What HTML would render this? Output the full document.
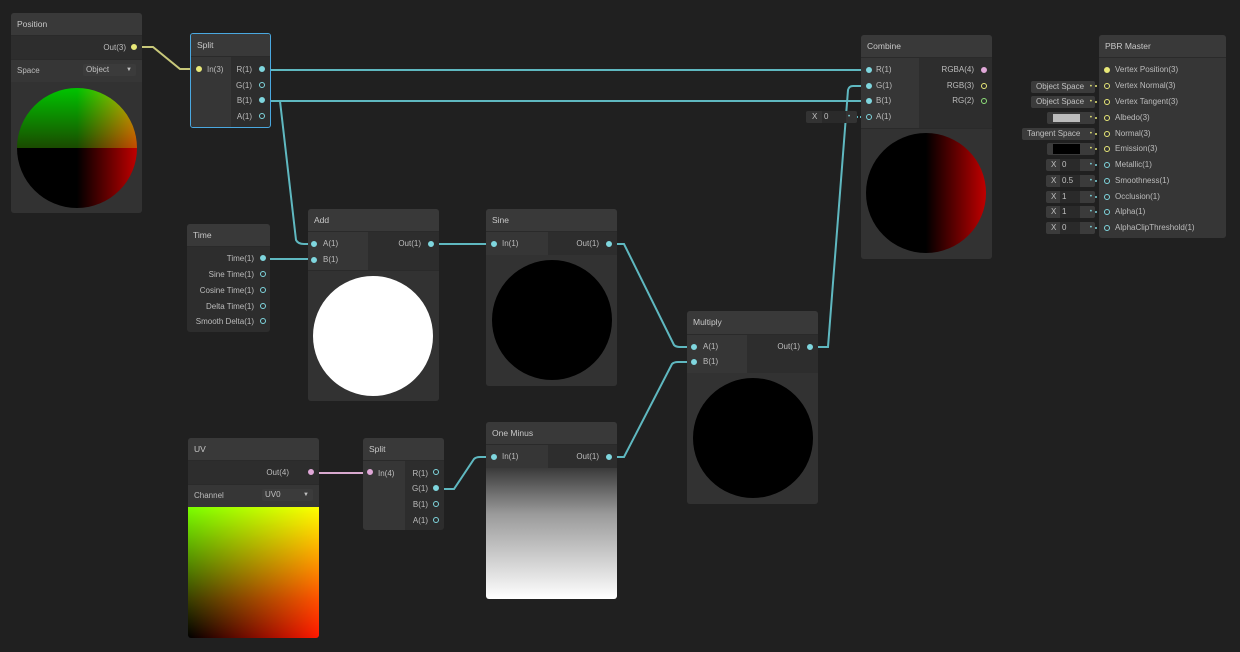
<!DOCTYPE html>
<html><head><style>
*{margin:0;padding:0;box-sizing:border-box}
body{width:1240px;height:652px;background:#202020;font-family:"Liberation Sans",sans-serif;font-size:8px;color:#c4c4c4;position:relative;overflow:hidden}
.n{position:absolute;background:#2d2d2d;border-radius:3px;overflow:hidden}
.h{position:absolute;left:0;right:0;top:0;background:#393939;color:#c8c8c8;font-size:8.5px;padding-left:6px;border-bottom:1px solid #2a2a2a}
.a{position:absolute}
.t{position:absolute;font-size:8px;color:#bcbcbc;white-space:nowrap;line-height:10px}
.r{text-align:right}
.in{background:#363636}
.p{position:absolute;width:6px;height:6px;border-radius:50%;border:1.5px solid #7fd6de}
.p.f{background:#7fd6de}
.fld{position:absolute;background:#3b3b3b;border-radius:2px;font-size:8px;color:#c0c0c0;line-height:12px;height:12px}
svg{position:absolute;left:0;top:0}
</style></head><body>
<svg width="1240" height="652" fill="none" stroke-width="2">
<defs><linearGradient id="pg" x1="0" x2="1"><stop offset="0" stop-color="#d9a9cf"/><stop offset="1" stop-color="#c8c87a"/></linearGradient></defs>
<path d="M138 47 H153 L180 69 H199" stroke="#c8c87a"/>
<path d="M262 70 H869" stroke="#5fb8c0"/>
<path d="M262 101 H869" stroke="#5fb8c0"/>
<path d="M262 101 H280 L296 240 Q298 244 304 244 H313" stroke="#5fb8c0"/>
<path d="M262 259 H313" stroke="#5fb8c0"/>
<path d="M431 244 H494" stroke="#5fb8c0"/>
<path d="M610 244 H624 L674 345 Q676 347 680 347 H694" stroke="#5fb8c0"/>
<path d="M436 489 H454 L474 459 Q476 457 480 457 H494" stroke="#5fb8c0"/>
<path d="M610 457 H624 L672 364 Q674 362 678 362 H694" stroke="#5fb8c0"/>
<path d="M810 347 H828 L848 90 Q849 86 853 86 H869" stroke="#5fb8c0"/>
<path d="M984 70 H1107" stroke="url(#pg)"/>
<path d="M312 473 H370" stroke="#d9a9cf"/>
<path d="M852 117 H869" stroke="#5fb8c0" stroke-dasharray="2 2"/>
</svg>

<!-- Position -->
<div class="n" style="left:11px;top:13px;width:131px;height:200px">
<div class="h" style="height:23px;line-height:22px">Position</div>
<div class="a" style="top:23px;left:0;right:0;height:23px;background:#2d2d2d"></div>
<div class="t r" style="right:16px;top:30px">Out(3)</div>
<div class="p f" style="right:5px;top:31px;border-color:#e8e878;background:#e8e878"></div>
<div class="a" style="top:46px;left:0;right:0;height:23px;background:#363636;border-top:1px solid #2a2a2a"></div>
<div class="t" style="left:6px;top:53px">Space</div>
<div class="fld" style="left:72px;top:51px;width:53px;padding-left:3px">Object<span style="position:absolute;right:4px;font-size:6px">▼</span></div>
<div class="a" style="top:69px;left:0;right:0;bottom:0;background:#323232"></div>
<div class="a" style="left:6px;top:75px;width:120px;height:120px;border-radius:50%;background:linear-gradient(to right,#000 50%,#c00000 100%),linear-gradient(to bottom,#00c400 0%,#1a4a00 50%,#000 50%);background-blend-mode:screen"></div>
</div>

<!-- Split -->
<div class="n" style="left:190px;top:33px;width:81px;height:95px;border:1px solid #4aa8e0">
<div class="h" style="height:23px;line-height:22px">Split</div>
<div class="a in" style="left:0;top:23px;width:40px;bottom:0"></div>
<div class="p f" style="left:5px;top:32px;border-color:#e8e878;background:#e8e878"></div>
<div class="t" style="left:16px;top:31px">In(3)</div>
<div class="t r" style="right:18px;top:31px">R(1)</div><div class="p f" style="right:5px;top:32px"></div>
<div class="t r" style="right:18px;top:47px">G(1)</div><div class="p" style="right:5px;top:48px"></div>
<div class="t r" style="right:18px;top:62px">B(1)</div><div class="p f" style="right:5px;top:63px"></div>
<div class="t r" style="right:18px;top:78px">A(1)</div><div class="p" style="right:5px;top:79px"></div>
</div>

<!-- Time -->
<div class="n" style="left:187px;top:224px;width:83px;height:108px">
<div class="h" style="height:23px;line-height:22px">Time</div>
<div class="t r" style="right:16px;top:30px">Time(1)</div><div class="p f" style="right:4px;top:31px"></div>
<div class="t r" style="right:16px;top:46px">Sine Time(1)</div><div class="p" style="right:4px;top:47px"></div>
<div class="t r" style="right:16px;top:62px">Cosine Time(1)</div><div class="p" style="right:4px;top:63px"></div>
<div class="t r" style="right:16px;top:78px">Delta Time(1)</div><div class="p" style="right:4px;top:79px"></div>
<div class="t r" style="right:16px;top:93px">Smooth Delta(1)</div><div class="p" style="right:4px;top:94px"></div>
</div>

<!-- Add -->
<div class="n" style="left:308px;top:209px;width:131px;height:192px">
<div class="h" style="height:23px;line-height:22px">Add</div>
<div class="a in" style="left:0;top:23px;width:60px;height:38px"></div>
<div class="p f" style="left:3px;top:32px"></div><div class="t" style="left:15px;top:30px">A(1)</div>
<div class="p f" style="left:3px;top:48px"></div><div class="t" style="left:15px;top:46px">B(1)</div>
<div class="t r" style="right:18px;top:30px">Out(1)</div><div class="p f" style="right:5px;top:32px"></div>
<div class="a" style="left:0;right:0;top:61px;bottom:0;background:#323232;border-top:1px solid #2a2a2a"></div>
<div class="a" style="left:5px;top:67px;width:120px;height:120px;border-radius:50%;background:#fff"></div>
</div>

<!-- Sine -->
<div class="n" style="left:486px;top:209px;width:131px;height:177px">
<div class="h" style="height:23px;line-height:22px">Sine</div>
<div class="a in" style="left:0;top:23px;width:62px;height:23px"></div>
<div class="p f" style="left:5px;top:32px"></div><div class="t" style="left:16px;top:30px">In(1)</div>
<div class="t r" style="right:18px;top:30px">Out(1)</div><div class="p f" style="right:5px;top:32px"></div>
<div class="a" style="left:0;right:0;top:46px;bottom:0;background:#323232"></div>
<div class="a" style="left:6px;top:51px;width:120px;height:120px;border-radius:50%;background:#000"></div>
</div>

<!-- Multiply -->
<div class="n" style="left:687px;top:311px;width:131px;height:193px">
<div class="h" style="height:24px;line-height:23px">Multiply</div>
<div class="a in" style="left:0;top:24px;width:60px;height:38px"></div>
<div class="p f" style="left:4px;top:33px"></div><div class="t" style="left:16px;top:31px">A(1)</div>
<div class="p f" style="left:4px;top:48px"></div><div class="t" style="left:16px;top:46px">B(1)</div>
<div class="t r" style="right:18px;top:31px">Out(1)</div><div class="p f" style="right:5px;top:33px"></div>
<div class="a" style="left:0;right:0;top:62px;bottom:0;background:#323232"></div>
<div class="a" style="left:6px;top:67px;width:120px;height:120px;border-radius:50%;background:#000"></div>
</div>

<!-- One Minus -->
<div class="n" style="left:486px;top:422px;width:131px;height:177px">
<div class="h" style="height:23px;line-height:22px">One Minus</div>
<div class="a in" style="left:0;top:23px;width:62px;height:23px"></div>
<div class="p f" style="left:5px;top:32px"></div><div class="t" style="left:16px;top:30px">In(1)</div>
<div class="t r" style="right:18px;top:30px">Out(1)</div><div class="p f" style="right:5px;top:32px"></div>
<div class="a" style="left:0;right:0;top:46px;bottom:0;background:linear-gradient(#3a3a3a,#9a9a9a 35%,#d0d0d0 70%,#fff)"></div>
</div>

<!-- UV -->
<div class="n" style="left:188px;top:438px;width:131px;height:200px">
<div class="h" style="height:23px;line-height:22px">UV</div>
<div class="t r" style="right:30px;top:30px">Out(4)</div>
<div class="p f" style="right:5px;top:31px;border-color:#e0a8d8;background:#e0a8d8"></div>
<div class="a" style="top:46px;left:0;right:0;height:23px;background:#363636;border-top:1px solid #2a2a2a"></div>
<div class="t" style="left:6px;top:53px">Channel</div>
<div class="fld" style="left:74px;top:51px;width:51px;padding-left:3px">UV0<span style="position:absolute;right:4px;font-size:6px">▼</span></div>
<div class="a" style="top:69px;left:0;right:0;bottom:0;background:linear-gradient(to right,#000,#ff1800),linear-gradient(to bottom,#7aff00,#3a4000 70%,#000);background-blend-mode:screen"></div>
</div>

<!-- Split2 -->
<div class="n" style="left:363px;top:438px;width:81px;height:92px">
<div class="h" style="height:23px;line-height:22px">Split</div>
<div class="a in" style="left:0;top:23px;width:42px;bottom:0"></div>
<div class="p f" style="left:4px;top:31px;border-color:#e0a8d8;background:#e0a8d8"></div>
<div class="t" style="left:15px;top:31px">In(4)</div>
<div class="t r" style="right:16px;top:31px">R(1)</div><div class="p" style="right:5px;top:31px"></div>
<div class="t r" style="right:16px;top:46px">G(1)</div><div class="p f" style="right:5px;top:47px"></div>
<div class="t r" style="right:16px;top:62px">B(1)</div><div class="p" style="right:5px;top:63px"></div>
<div class="t r" style="right:16px;top:78px">A(1)</div><div class="p" style="right:5px;top:79px"></div>
</div>

<!-- Combine -->
<div class="fld" style="left:806px;top:111px;width:51px;background:#333"><span style="position:absolute;left:6px">X</span><span style="position:absolute;left:16px;width:24px;background:#2a2a2a;padding-left:2px">0</span><span style="position:absolute;left:42px;font-size:6px;color:#7fd6de">•</span></div>
<div class="n" style="left:861px;top:35px;width:131px;height:224px">
<div class="h" style="height:23px;line-height:22px">Combine</div>
<div class="a in" style="left:0;top:23px;width:58px;height:70px"></div>
<div class="p f" style="left:5px;top:32px"></div><div class="t" style="left:15px;top:30px">R(1)</div>
<div class="p f" style="left:5px;top:48px"></div><div class="t" style="left:15px;top:46px">G(1)</div>
<div class="p f" style="left:5px;top:63px"></div><div class="t" style="left:15px;top:61px">B(1)</div>
<div class="p" style="left:5px;top:79px"></div><div class="t" style="left:15px;top:77px">A(1)</div>
<div class="t r" style="right:18px;top:30px">RGBA(4)</div><div class="p f" style="right:5px;top:32px;border-color:#e0a8d8;background:#e0a8d8"></div>
<div class="t r" style="right:18px;top:46px">RGB(3)</div><div class="p" style="right:5px;top:48px;border-color:#e8e878"></div>
<div class="t r" style="right:18px;top:61px">RG(2)</div><div class="p" style="right:5px;top:63px;border-color:#8ee07a"></div>
<div class="a" style="left:0;right:0;top:93px;bottom:0;background:#323232;border-top:1px solid #2a2a2a"></div>
<div class="a" style="left:5px;top:98px;width:120px;height:120px;border-radius:50%;background:linear-gradient(to right,#000 50%,#c00000)"></div>
</div>

<!-- PBR fields -->
<div class="fld" style="left:1031px;top:81px;width:64px;padding-left:5px">Object Space<span style="position:absolute;right:3px;font-size:6px;color:#e8e878">•</span></div>
<div class="fld" style="left:1031px;top:96px;width:64px;padding-left:5px">Object Space<span style="position:absolute;right:3px;font-size:6px;color:#e8e878">•</span></div>
<div class="fld" style="left:1047px;top:112px;width:48px"><span style="position:absolute;left:6px;top:2px;width:27px;height:8px;background:#bcbcbc"></span><span style="position:absolute;right:3px;font-size:6px;color:#e8e878">•</span></div>
<div class="fld" style="left:1022px;top:128px;width:73px;padding-left:5px">Tangent Space<span style="position:absolute;right:3px;font-size:6px;color:#e8e878">•</span></div>
<div class="fld" style="left:1047px;top:143px;width:48px"><span style="position:absolute;left:6px;top:1px;width:27px;height:10px;background:#000"></span><span style="position:absolute;right:3px;font-size:6px;color:#e8e878">•</span></div>
<div class="fld" style="left:1046px;top:159px;width:49px"><span style="position:absolute;left:5px">X</span><span style="position:absolute;left:14px;width:20px;background:#2a2a2a;padding-left:2px">0</span><span style="position:absolute;right:3px;font-size:6px;color:#7fd6de">•</span></div>
<div class="fld" style="left:1046px;top:175px;width:49px"><span style="position:absolute;left:5px">X</span><span style="position:absolute;left:14px;width:20px;background:#2a2a2a;padding-left:2px">0.5</span><span style="position:absolute;right:3px;font-size:6px;color:#7fd6de">•</span></div>
<div class="fld" style="left:1046px;top:191px;width:49px"><span style="position:absolute;left:5px">X</span><span style="position:absolute;left:14px;width:20px;background:#2a2a2a;padding-left:2px">1</span><span style="position:absolute;right:3px;font-size:6px;color:#7fd6de">•</span></div>
<div class="fld" style="left:1046px;top:206px;width:49px"><span style="position:absolute;left:5px">X</span><span style="position:absolute;left:14px;width:20px;background:#2a2a2a;padding-left:2px">1</span><span style="position:absolute;right:3px;font-size:6px;color:#7fd6de">•</span></div>
<div class="fld" style="left:1046px;top:222px;width:49px"><span style="position:absolute;left:5px">X</span><span style="position:absolute;left:14px;width:20px;background:#2a2a2a;padding-left:2px">0</span><span style="position:absolute;right:3px;font-size:6px;color:#7fd6de">•</span></div>
<svg width="1240" height="652" fill="none" stroke-width="1.5" stroke-dasharray="2 2">
<path d="M1095 86H1103M1095 102H1103M1095 118H1103M1095 134H1103M1095 149H1103" stroke="#e8e878"/>
<path d="M1095 165H1103M1095 181H1103M1095 197H1103M1095 212H1103M1095 228H1103" stroke="#7fd6de"/>
</svg>

<!-- PBR Master -->
<div class="n" style="left:1099px;top:35px;width:127px;height:203px">
<div class="h" style="height:23px;line-height:22px">PBR Master</div>
<div class="a" style="left:0;right:0;top:23px;bottom:0;background:#363636"></div>
<div class="p f" style="left:5px;top:32px;border-color:#e8e878;background:#e8e878"></div><div class="t" style="left:16px;top:30px">Vertex Position(3)</div>
<div class="p" style="left:5px;top:48px;border-color:#e8e878"></div><div class="t" style="left:16px;top:46px">Vertex Normal(3)</div>
<div class="p" style="left:5px;top:64px;border-color:#e8e878"></div><div class="t" style="left:16px;top:62px">Vertex Tangent(3)</div>
<div class="p" style="left:5px;top:80px;border-color:#e8e878"></div><div class="t" style="left:16px;top:78px">Albedo(3)</div>
<div class="p" style="left:5px;top:96px;border-color:#e8e878"></div><div class="t" style="left:16px;top:94px">Normal(3)</div>
<div class="p" style="left:5px;top:111px;border-color:#e8e878"></div><div class="t" style="left:16px;top:109px">Emission(3)</div>
<div class="p" style="left:5px;top:127px"></div><div class="t" style="left:16px;top:125px">Metallic(1)</div>
<div class="p" style="left:5px;top:143px"></div><div class="t" style="left:16px;top:141px">Smoothness(1)</div>
<div class="p" style="left:5px;top:159px"></div><div class="t" style="left:16px;top:157px">Occlusion(1)</div>
<div class="p" style="left:5px;top:174px"></div><div class="t" style="left:16px;top:172px">Alpha(1)</div>
<div class="p" style="left:5px;top:190px"></div><div class="t" style="left:16px;top:188px">AlphaClipThreshold(1)</div>
</div>
</body></html>
